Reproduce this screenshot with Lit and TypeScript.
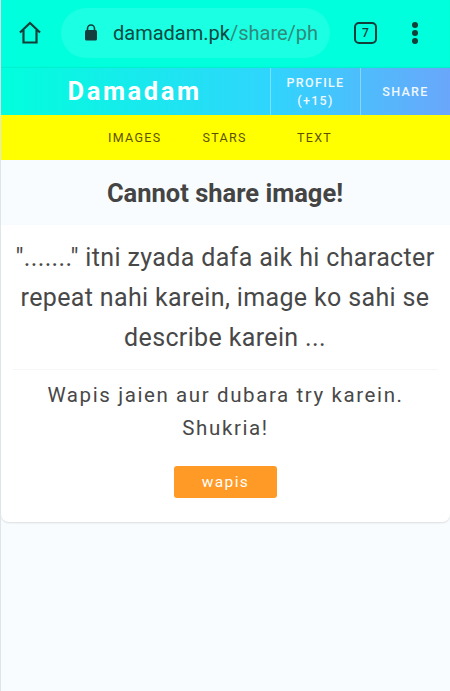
import { LitElement, html, css } from "lit";
import { customElement } from "lit/decorators.js";

@customElement("app-root")
export class AppRoot extends LitElement {
  static styles = css`
    :host { display: block; width: 450px; height: 691px; overflow: hidden; background: #f9fcfe; font-family: Roboto, "Liberation Sans", sans-serif; color: #444; border-left: 1px solid #dfe6e8; box-sizing: border-box; }
    .chrome { height: 68px; margin-left: -1px; background: #00ffdc; display: flex; align-items: center; box-sizing: border-box; padding-bottom: 3px; color: #0d4a42; box-shadow: inset 0 -1px 1px rgba(0,120,110,.12); }
    .home { width: 60px; display: flex; justify-content: center; flex: none; }
    .pill { width: 269px; height: 50px; border-radius: 25px; background: #1bffe2; display: flex; align-items: center; box-sizing: border-box; padding-left: 23px; flex: none; margin-left: 1px; }
    .url { font-size: 20px; margin-left: 15px; white-space: nowrap; color: #0b4a42; }
    .url span { color: #2f8a7c; }
    .tabs { width: 23px; height: 22px; border: 2.5px solid #123f3a; border-radius: 5px; box-sizing: border-box; margin-left: 24px; font-size: 12px; font-weight: 500; display: flex; align-items: center; justify-content: center; flex: none; color: #123f3a; }
    .dots { display: flex; flex-direction: column; gap: 2px; margin-left: 35px; }
    .dots i { width: 6px; height: 6px; border-radius: 50%; background: #123f3a; display: block; }
    .head { height: 47px; margin-left: -1px; display: flex; background: linear-gradient(90deg, #00ffdc 0%, #2fd5fd 60%, #6aa6fb 100%); color: #fff; }
    .brand { width: 270px; flex: none; box-sizing: border-box; padding-left: 67.5px; font-size: 25.5px; font-weight: 700; letter-spacing: 2.6px; line-height: 46px; }
    .hbtn { border-left: 1px solid rgba(255,255,255,.35); display: flex; align-items: center; justify-content: center; text-align: center; font-size: 12.5px; font-weight: 500; letter-spacing: 1.3px; line-height: 18px; box-sizing: border-box; color: #f0f8ff; }
    .p { width: 90px; }
    .s { flex: 1; }
    .nav { height: 45px; margin-left: -1px; background: #ffff00; color: #5c5200; font-size: 12.5px; letter-spacing: 1.3px; display: flex; align-items: center; box-sizing: border-box; padding-left: 108px; padding-bottom: 1px; }
    .nav span { flex: none; width: 94.5px; }
    .title { height: 65px; font-size: 25.5px; font-weight: 700; display: flex; align-items: center; justify-content: center; margin-right: 1px; color: #444; }
    .card { background: #fff; border-radius: 0 0 8px 8px; box-shadow: 0 1px 2px rgba(0,0,0,.12); padding: 0 12px; height: 297px; box-sizing: border-box; display: flex; flex-direction: column; align-items: center; }
    .msg { font-size: 25px; line-height: 40px; text-align: center; padding-top: 13px; padding-bottom: 11px; border-bottom: 1px solid #f4f6f7; width: 100%; letter-spacing: 0.36px; margin-right: 1px; color: #484848; }
    .sub { font-size: 20.5px; line-height: 33px; letter-spacing: 1.6px; text-align: center; padding-top: 9px; color: #484848; }
    .btn { margin-top: 21px; width: 103px; height: 32px; border-radius: 3px; background: #ff9a26; color: #fff; font-size: 15.5px; letter-spacing: 1.4px; display: flex; align-items: center; justify-content: center; }
  `;
  render() {
    return html`
      <div class="chrome">
        <div class="home"><svg width="24" height="23" viewBox="0 0 24 23" fill="none" stroke="#123f3a" stroke-width="2.2"><path d="M2 11.5 12 2l10 9.5M5.5 9v12.5h13V9"/></svg></div>
        <div class="pill">
          <svg width="14" height="17" viewBox="0 0 14 17"><path d="M3.5 6V4.5a3.5 3.5 0 0 1 7 0V6" fill="none" stroke="#143d3d" stroke-width="1.6"/><rect x="1" y="6" width="12" height="10.5" rx="1.5" fill="#143d3d"/></svg>
          <div class="url">damadam.pk<span>/share/ph</span></div>
        </div>
        <div class="tabs">7</div>
        <div class="dots"><i></i><i></i><i></i></div>
      </div>
      <div class="head">
        <div class="brand">Damadam</div>
        <div class="hbtn p"><div>PROFILE<br />(+15)</div></div>
        <div class="hbtn s">SHARE</div>
      </div>
      <div class="nav"><span>IMAGES</span><span>STARS</span><span>TEXT</span></div>
      <div class="title">Cannot share image!</div>
      <div class="card">
        <div class="msg">"......." itni zyada dafa aik hi character repeat nahi karein, image ko sahi se describe karein ...</div>
        <div class="sub">Wapis jaien aur dubara try karein.<br />Shukria!</div>
        <div class="btn">wapis</div>
      </div>
    `;
  }
}
